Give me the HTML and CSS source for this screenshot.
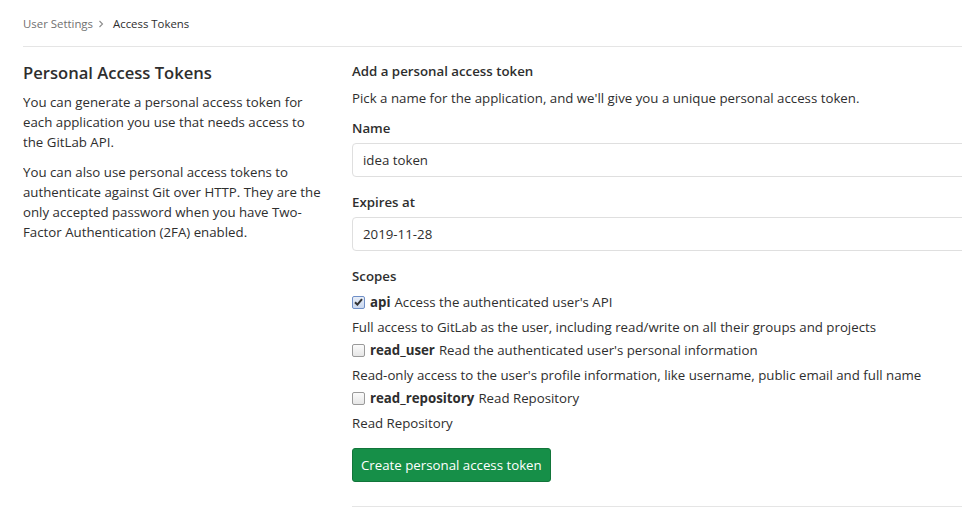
FILE: index.html
```html
<!DOCTYPE html>
<html>
<head>
<meta charset="utf-8">
<title>Access Tokens</title>
<link rel="stylesheet" href="styles.css">
</head>
<body>
<div class="page">
  <nav class="crumbs">
    <a class="crumb-link">User Settings</a>
    <svg class="chev" width="6" height="8" viewBox="0 0 6 8"><path d="M1.5 1 L4.5 4 L1.5 7" fill="none" stroke="#8c8c8c" stroke-width="1.1"/></svg>
    <span class="crumb-current">Access Tokens</span>
  </nav>
  <div class="row">
    <aside class="side">
      <h4 class="side-title">Personal Access Tokens</h4>
      <p class="side-text">You can generate a personal access token for each application you use that needs access to the GitLab API.</p>
      <p class="side-text">You can also use personal access tokens to authenticate against Git over HTTP. They are the only accepted password when you have Two-Factor Authentication (2FA) enabled.</p>
    </aside>
    <main class="main">
      <h5 class="main-title">Add a personal access token</h5>
      <p class="intro">Pick a name for the application, and we'll give you a unique personal access token.</p>
      <div class="field">
        <label class="label">Name</label>
        <div class="input">idea token</div>
      </div>
      <div class="field">
        <label class="label">Expires at</label>
        <div class="input">2019-11-28</div>
      </div>
      <div class="label scopes-label">Scopes</div>
      <div class="scope">
        <div class="check-row"><span class="cb cb-on"><svg width="9" height="8" viewBox="0 0 9 8"><path d="M1 4.2 L3.4 6.6 L8 1.2" fill="none" stroke="#333" stroke-width="2"/></svg></span><b>api</b> Access the authenticated user's API</div>
        <div class="help">Full access to GitLab as the user, including read/write on all their groups and projects</div>
      </div>
      <div class="scope">
        <div class="check-row"><span class="cb"></span><b>read_user</b> Read the authenticated user's personal information</div>
        <div class="help">Read-only access to the user's profile information, like username, public email and full name</div>
      </div>
      <div class="scope">
        <div class="check-row"><span class="cb"></span><b>read_repository</b> Read Repository</div>
        <div class="help">Read Repository</div>
      </div>
      <button class="btn">Create personal access token</button>
      <hr class="rule">
    </main>
  </div>
</div>
</body>
</html>
```
FILE: styles.css
```css
html, body {
  margin: 0;
  padding: 0;
  background: #fff;
  overflow: hidden;
}
body {
  font-family: "Open Sans", "Noto Sans", sans-serif;
  font-size: 13.27px;
  color: #2e2e2e;
  line-height: 20px;
}
.page {
  margin-left: 23px;
  width: 939px;
  overflow: hidden;
}
.crumbs {
  height: 47px;
  padding-top: 1px;
  box-sizing: border-box;
  display: flex;
  align-items: center;
  border-bottom: 1px solid #e5e5e5;
  font-size: 11.4px;
}
.crumb-link {
  color: #707070;
}
.chev {
  margin: 0 9px 0 5px;
}
.crumb-current {
  color: #2e2e2e;
  font-weight: 500;
}
.row {
  display: grid;
  grid-template-columns: 305px 700px;
  column-gap: 24px;
  padding-top: 14px;
}
.side-title {
  margin: 0 0 7px;
  font-size: 16.6px;
  line-height: 24px;
  font-weight: 600;
}
.side-text {
  margin: 0 0 10px;
}
.main-title {
  margin: 0 0 7px;
  font-size: 13.27px;
  font-weight: 600;
  line-height: 20px;
}
.intro {
  margin: 0 0 10px;
}
.field {
  margin-bottom: 15px;
}
.label {
  display: block;
  font-weight: 600;
  margin-bottom: 5px;
}
.input {
  height: 32px;
  border: 1px solid #dfdfdf;
  border-radius: 4px;
  padding: 0 10px;
  display: flex;
  align-items: center;
}
.scopes-label {
  margin-bottom: 6px;
}
.scope {
  margin-bottom: 3px;
}
.check-row {
  display: flex;
  align-items: center;
  white-space: nowrap;
}
.check-row b {
  font-weight: 700;
  margin-right: 4px;
}
.help {
  margin-top: 5px;
}
.cb {
  width: 11px;
  height: 11px;
  border: 1px solid #9a9a9a;
  border-radius: 2px;
  background: linear-gradient(#fbfbfb, #e6e6e6);
  margin-right: 5px;
  display: inline-flex;
  align-items: center;
  justify-content: center;
  flex: none;
}
.cb-on {
  border-color: #6f8fc7;
  background: linear-gradient(#e8eef8, #c9d7ee);
}
.btn {
  margin-top: 15px;
  height: 34px;
  padding: 0 8px;
  background: #168f48;
  border: 1px solid #12753a;
  border-radius: 3px;
  color: #fff;
  font-family: inherit;
  font-size: 13.27px;
  display: block;
}
.rule {
  margin: 24px 0 0;
  border: 0;
  border-top: 1px solid #e5e5e5;
}
```
